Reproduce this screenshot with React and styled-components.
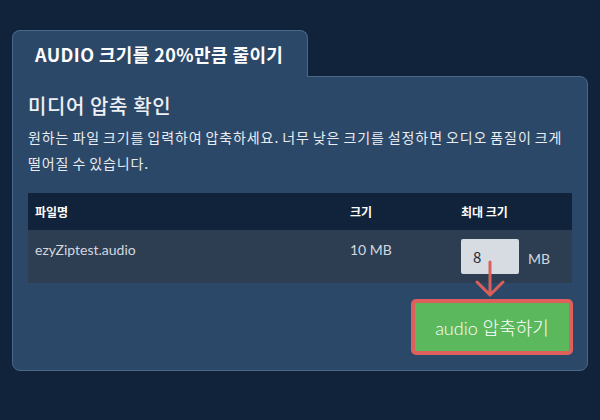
import React from 'react';
import styled, { createGlobalStyle } from 'styled-components';

const GlobalStyle = createGlobalStyle`
  html, body {
    margin: 0;
    padding: 0;
    background: #11233a;
  }
  body {
    width: 600px;
    height: 420px;
    overflow: hidden;
    font-family: "Noto Sans CJK KR", "Noto Sans", sans-serif;
  }
`;

const Page = styled.div`
  position: relative;
  padding: 30px 12px 0 12px;
  width: 576px;
`;

const Tab = styled.div`
  position: relative;
  z-index: 1;
  box-sizing: border-box;
  width: 296px;
  height: 47px;
  margin-bottom: -1px;
  background: #2c4868;
  border: 1px solid #4a6888;
  border-bottom: none;
  border-radius: 8px 8px 0 0;
  color: #ffffff;
  font-size: 18px;
  font-weight: 700;
  line-height: 46px;
  padding-left: 22px;
  letter-spacing: 0.4px;
`;

const Panel = styled.div`
  box-sizing: border-box;
  background: #2c4868;
  border: 1px solid #4a6888;
  border-radius: 0 8px 8px 8px;
  padding: 15px;
  display: flex;
  flex-direction: column;
`;

const Title = styled.h2`
  margin: 0;
  font-size: 20px;
  font-weight: 500;
  line-height: 28px;
  color: #eef0f3;
  letter-spacing: 0.6px;
`;

const Desc = styled.p`
  margin: 4px 0 0 0;
  font-size: 14px;
  line-height: 26px;
  color: #e9ecf0;
  letter-spacing: 0.9px;
  word-spacing: -1px;
`;

const Table = styled.div`
  margin-top: 17px;
  display: grid;
  grid-template-columns: 315px 111px 1fr;
`;

const HeadCell = styled.div`
  background: #10233a;
  height: 37px;
  padding: 0 7px;
  display: flex;
  align-items: center;
  font-size: 12px;
  font-weight: 700;
  color: #ffffff;
`;

const Cell = styled.div`
  background: #2d3e53;
  padding: ${p => (p.$input ? '9px 7px' : '10px 7px 0 7px')};
  font-family: Lato, "Noto Sans CJK KR", sans-serif;
  font-size: 14px;
  line-height: 19px;
  color: #d3d8df;
  display: ${p => (p.$input ? 'flex' : 'block')};
  align-items: center;
  gap: 9px;
`;

const SizeInput = styled.div`
  box-sizing: border-box;
  width: 58px;
  height: 35px;
  background: #d7dce3;
  border-radius: 2px;
  padding: 0 12px;
  display: flex;
  align-items: center;
  font-family: "Noto Sans CJK KR", sans-serif;
  font-size: 15px;
  color: #1d2836;
`;

const Unit = styled.span`
  font-size: 14px;
  color: #d3d8df;
  padding-top: 3px;
`;

const Actions = styled.div`
  margin-top: 16px;
  display: flex;
  justify-content: flex-end;
  margin-right: -1px;
`;

const CompressButton = styled.button`
  box-sizing: border-box;
  width: 162px;
  height: 56px;
  background: #5cb85c;
  border: 4px solid #de5f5b;
  border-radius: 5px;
  color: #ffffff;
  font-family: Lato, "Noto Sans CJK KR", sans-serif;
  font-size: 18px;
  font-weight: 300;
  padding: 0;
  cursor: pointer;
`;

const Arrow = styled.svg`
  position: absolute;
  left: 470px;
  top: 258px;
  z-index: 2;
  pointer-events: none;
`;

export default function App() {
  return (
    <>
      <GlobalStyle />
      <Page>
        <Tab>AUDIO 크기를 20%만큼 줄이기</Tab>
        <Panel>
          <Title>미디어 압축 확인</Title>
          <Desc>
            원하는 파일 크기를 입력하여 압축하세요. 너무 낮은 크기를 설정하면 오디오 품질이 크게 떨어질 수 있습니다.
          </Desc>
          <Table>
            <HeadCell>파일명</HeadCell>
            <HeadCell>크기</HeadCell>
            <HeadCell>최대 크기</HeadCell>
            <Cell>ezyZiptest.audio</Cell>
            <Cell>10 MB</Cell>
            <Cell $input>
              <SizeInput>8</SizeInput>
              <Unit>MB</Unit>
            </Cell>
          </Table>
          <Actions>
            <CompressButton>audio 압축하기</CompressButton>
          </Actions>
        </Panel>
        <Arrow width="40" height="42" viewBox="0 0 40 42">
          <path
            d="M20 4 L20 37 M7 24 L20 37 L33 24"
            fill="none"
            stroke="#d9605a"
            strokeWidth="3"
            strokeLinecap="round"
            strokeLinejoin="round"
          />
        </Arrow>
      </Page>
    </>
  );
}
